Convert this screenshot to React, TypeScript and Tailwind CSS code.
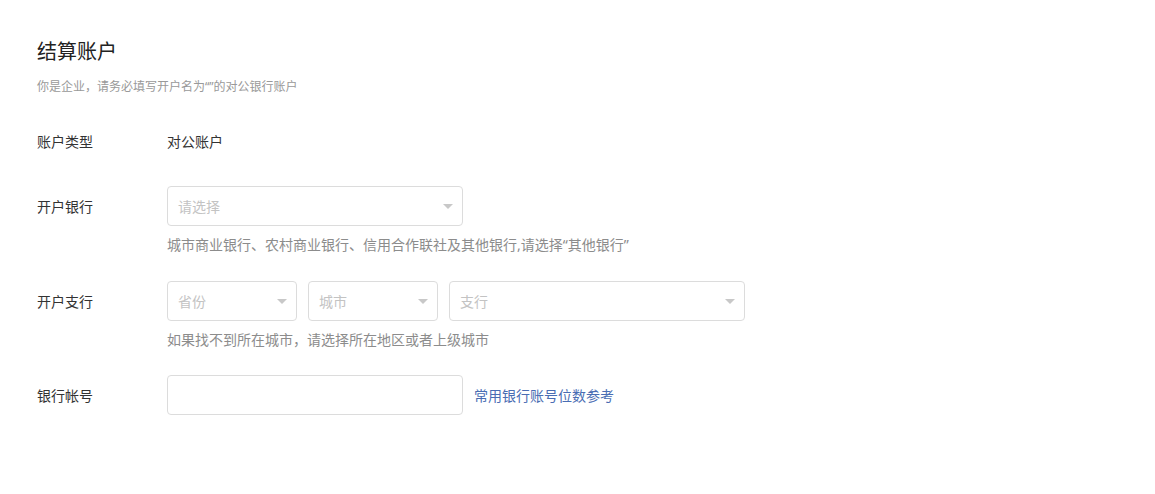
const font = "font-['Noto_Sans','Noto_Sans_CJK_SC',sans-serif]";

interface SelectBoxProps {
  placeholder: string;
  width: string;
}

const SelectBox = ({ placeholder, width }: SelectBoxProps) => {
  return (
    <div
      className={`${width} h-10 flex items-center justify-between rounded border border-[#dcdcdc] bg-white pl-[10px] pr-[9px]`}
    >
      <span className="text-[14px] text-[#c3c3c3]">{placeholder}</span>
      <span className="w-0 h-0 border-l-[5px] border-r-[5px] border-t-[5px] border-l-transparent border-r-transparent border-t-[#c8c8c8]" />
    </div>
  );
};

const FormRow = ({ label, children }: { label: string; children: React.ReactNode }) => {
  return (
    <div className="flex">
      <div className="w-[130px] shrink-0 h-10 flex items-center text-[14px] text-[#333]">{label}</div>
      <div className="flex flex-col">{children}</div>
    </div>
  );
};

export default function App() {
  return (
    <div className={`${font} bg-white w-[1155px] h-[494px] px-[37px] pt-[38px]`}>
      {/* Title */}
      <h2 className="text-[20px] leading-7 text-[#222]">结算账户</h2>
      <p className="mt-[12px] text-[12px] leading-[18px] text-[#999]">
        你是企业，请务必填写开户名为“”的对公银行账户
      </p>

      <div className="mt-[25px]">
        <FormRow label="账户类型">
          <div className="h-10 flex items-center text-[14px] text-[#333]">对公账户</div>
        </FormRow>
      </div>

      <div className="mt-[25px]">
        <FormRow label="开户银行">
          <SelectBox placeholder="请选择" width="w-[296px]" />
          <p className="mt-[9px] text-[14px] leading-5 text-[#8c8c8c]">
            城市商业银行、农村商业银行、信用合作联社及其他银行,请选择“其他银行”
          </p>
        </FormRow>
      </div>

      <div className="mt-[26px]">
        <FormRow label="开户支行">
          <div className="flex gap-[11px]">
            <SelectBox placeholder="省份" width="w-[130px]" />
            <SelectBox placeholder="城市" width="w-[130px]" />
            <SelectBox placeholder="支行" width="w-[296px]" />
          </div>
          <p className="mt-[9px] text-[14px] leading-5 text-[#8c8c8c]">
            如果找不到所在城市，请选择所在地区或者上级城市
          </p>
        </FormRow>
      </div>

      <div className="mt-[25px]">
        <FormRow label="银行帐号">
          <div className="flex items-center gap-[11px]">
            <input
              type="text"
              className="w-[296px] h-10 rounded border border-[#dcdcdc] bg-white px-[10px] text-[14px] outline-none"
            />
            <a href="#" className="text-[14px] text-[#4a6db3]">
              常用银行账号位数参考
            </a>
          </div>
        </FormRow>
      </div>
    </div>
  );
}
